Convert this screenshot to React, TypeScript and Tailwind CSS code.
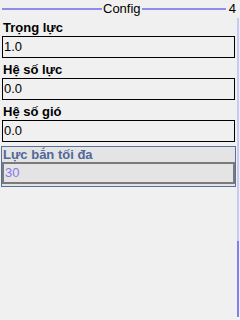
const fields = [
  { label: 'Trọng lực', value: '1.0' },
  { label: 'Hệ số lực', value: '0.0' },
  { label: 'Hệ số gió', value: '0.0' },
];

function Field({ label, value }: { label: string; value: string }) {
  return (
    <div className="flex flex-col mb-[3px]">
      <div className="h-[17px] leading-[17px] pl-[1px] text-[13px] font-bold text-black">{label}</div>
      <div className="h-[22px] border border-black pl-[1px] text-[13px] leading-[20px] text-black">{value}</div>
    </div>
  );
}

export default function App() {
  return (
    <div className="w-[240px] h-[320px] bg-[#eff0ef] flex font-['Liberation_Sans',Arial,sans-serif] overflow-hidden">
      <div className="w-[237px] flex flex-col">
        {/* title bar */}
        <div className="h-[18px] flex items-center">
          <div className="ml-[2px] w-[100px] h-[2px] bg-[#8c8cea]" />
          <span className="mx-[1px] text-[13px] leading-[18px] text-black">Config</span>
          <div className="flex-1 h-[2px] bg-[#8c8cea]" />
          <span className="ml-[3px] mr-[1px] text-[13px] leading-[18px] text-black">4</span>
        </div>

        <div className="flex flex-col pl-[2px] pt-[1px] w-[235px]">
          {fields.map((f) => (
            <Field key={f.label} label={f.label} value={f.value} />
          ))}

          {/* focused field */}
          <div className="mt-[1px] -ml-[1px] w-[235px] border border-[#56709e] bg-[#e4e4e4] pb-[2px]">
            <div className="h-[15px] leading-[15px] pl-[1px] text-[13px] font-bold text-[#4e6898]">Lực bắn tối đa</div>
            <div className="h-[22px] border-2 border-[#7a7a7a] pl-[1px] text-[13px] leading-[18px] text-[#8677ee]">30</div>
          </div>
        </div>
      </div>

      {/* scrollbar */}
      <div className="w-[3px] flex flex-col pt-[18px] pb-[3px]">
        <div className="flex-1 w-[2px] bg-[#c8c8f8]" />
        <div className="h-[76px] w-[2px] bg-[#8080f0]" />
      </div>
    </div>
  );
}
